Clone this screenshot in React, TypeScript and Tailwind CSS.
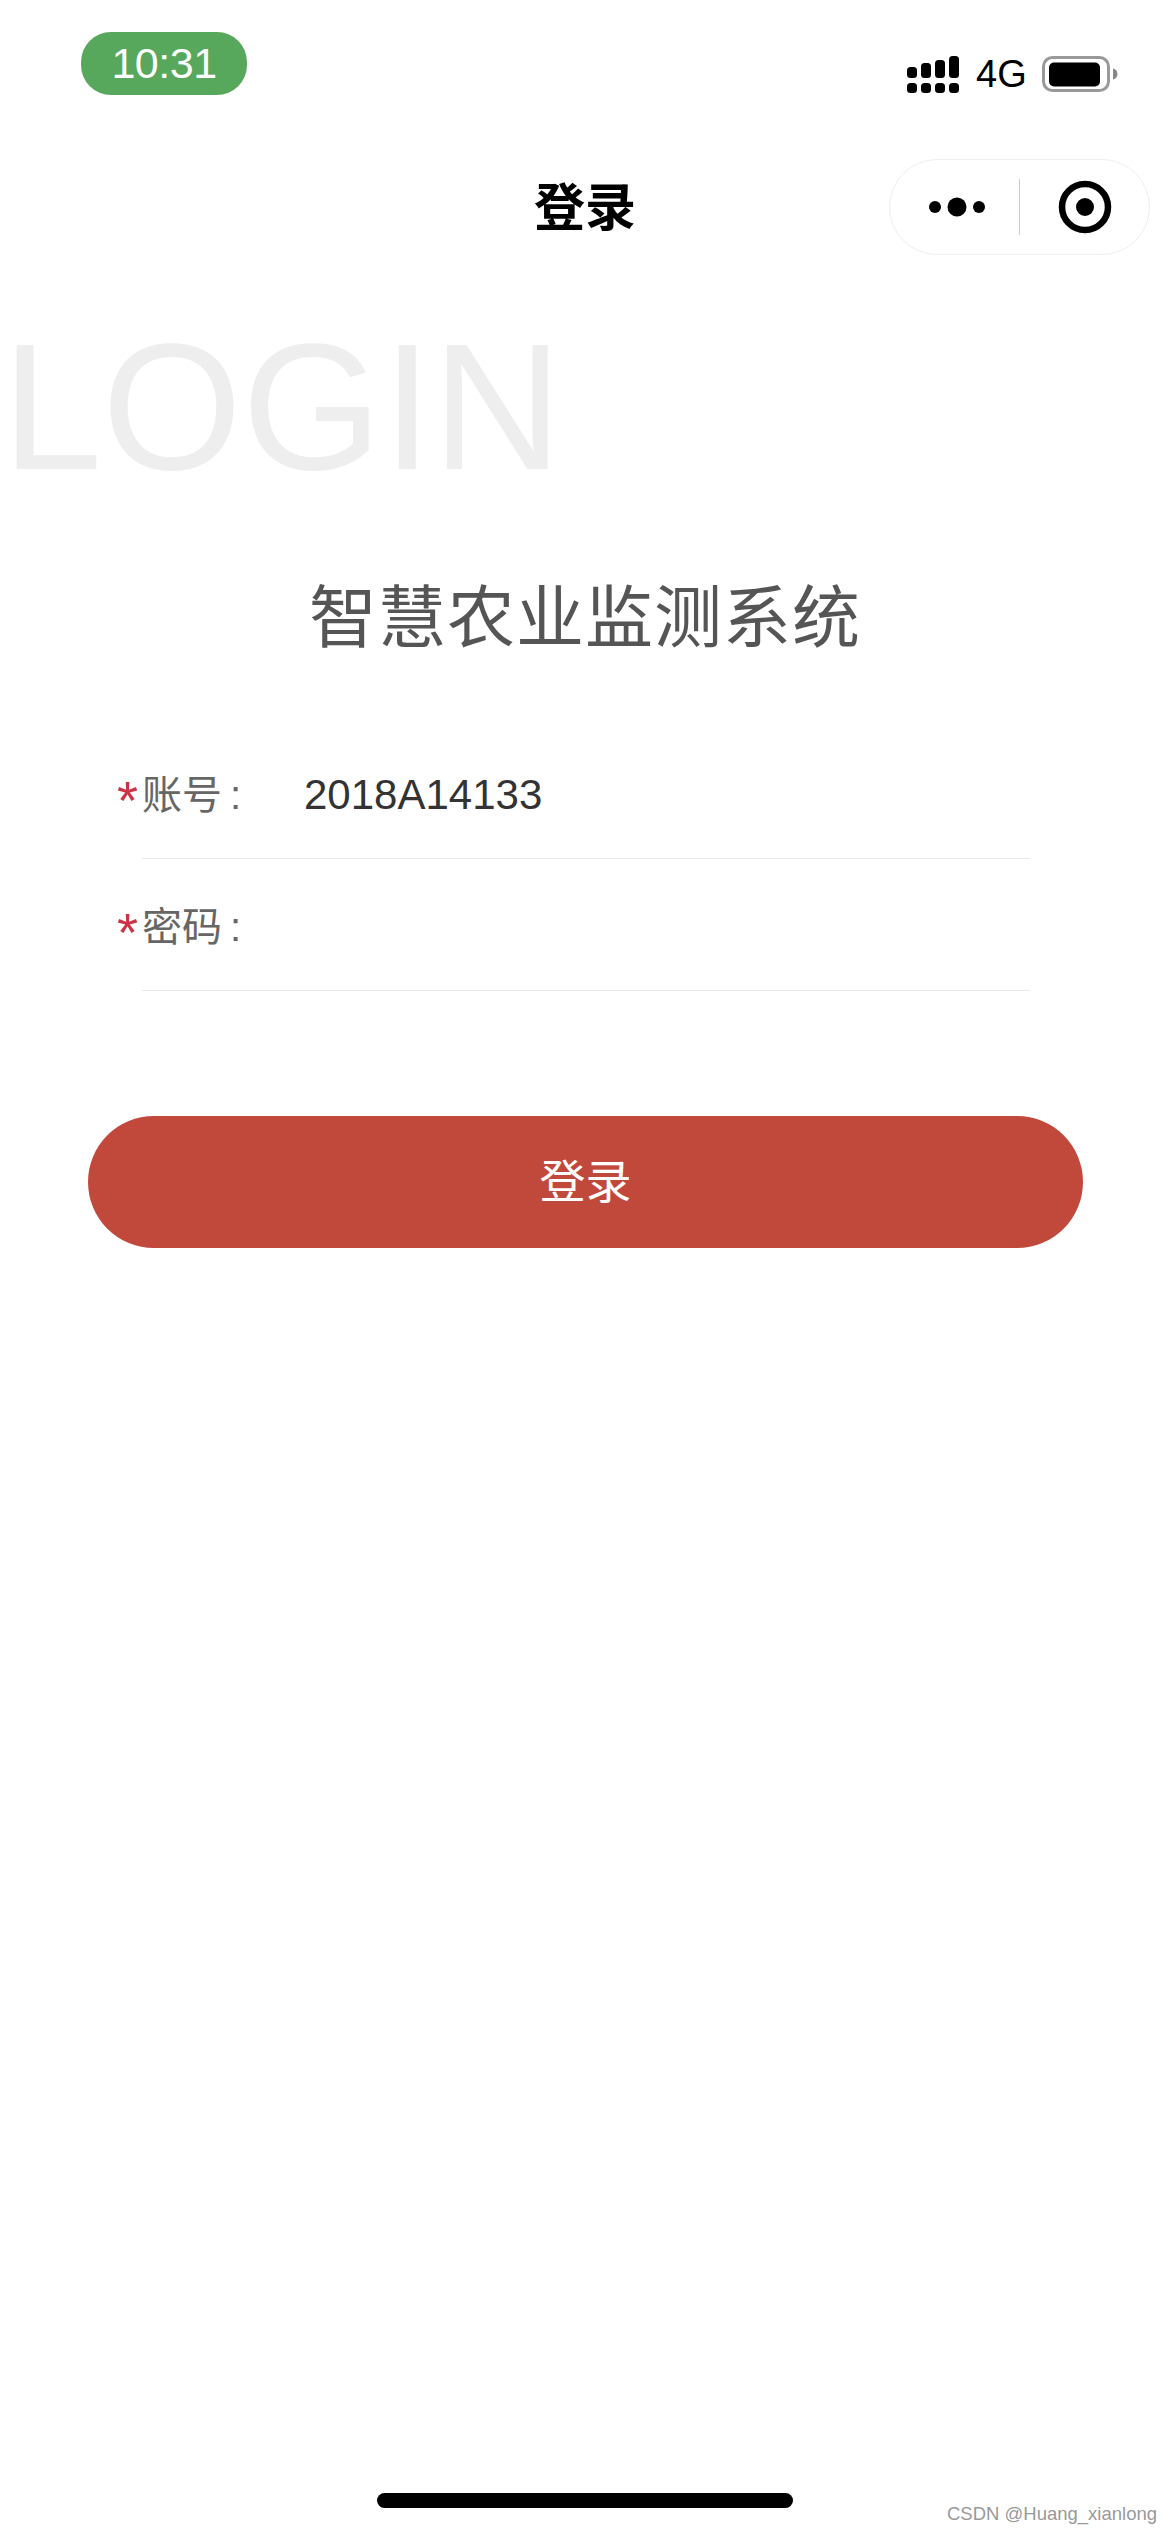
const sans = "font-['Liberation_Sans','Noto_Sans_CJK_SC',sans-serif]";

function Signal() {
  return (
    <svg width="52" height="38" viewBox="0 0 52 38" className="block">
      <rect x="0" y="11" width="10" height="11" rx="3.500" fill="#000" />
      <rect x="14" y="7" width="10" height="15" rx="3.500" fill="#000" />
      <rect x="28" y="4" width="10" height="18" rx="3.500" fill="#000" />
      <rect x="42" y="0" width="10" height="22" rx="3.500" fill="#000" />
      <rect x="0" y="27" width="10" height="10" rx="3.500" fill="#000" />
      <rect x="14" y="27" width="10" height="10" rx="3.500" fill="#000" />
      <rect x="28" y="27" width="10" height="10" rx="3.500" fill="#000" />
      <rect x="42" y="27" width="10" height="10" rx="3.500" fill="#000" />
    </svg>
  );
}

function Battery() {
  return (
    <svg width="76" height="36" viewBox="0 0 76 36" className="block">
      <rect x="1.5" y="1.5" width="65" height="33" rx="9" fill="none" stroke="#999" strokeWidth="3" />
      <rect x="7" y="6.5" width="51" height="24" rx="5" fill="#000" />
      <path d="M71 12.5c3 .5 4.5 3 4.5 5.500s-1.500 5-4.500 5.500z" fill="#888" />
    </svg>
  );
}

function Dots() {
  return (
    <svg width="62" height="22" viewBox="0 0 62 22" className="block">
      <circle cx="7" cy="11" r="6" fill="#000" />
      <circle cx="29" cy="11" r="9.500" fill="#000" />
      <circle cx="51" cy="11" r="6" fill="#000" />
    </svg>
  );
}

function Target() {
  return (
    <svg width="54" height="54" viewBox="0 0 54 54" className="block">
      <circle cx="27" cy="27" r="23" fill="none" stroke="#000" strokeWidth="6.500" />
      <circle cx="27" cy="27" r="9" fill="#000" />
    </svg>
  );
}

function Field({ label, value }: { label: string; value?: string }) {
  return (
    <div className="flex h-[132px] flex-col">
      <div className="flex h-[131px] items-center pt-[4px]">
        <span className="mt-[-12px] h-[32px] w-[25px] text-[54px] leading-[54px] text-[#cc3344]">*</span>
        <span className="flex w-[162px] items-center text-[40px] leading-none text-[#666]">
          {label}
          <span className="ml-[8px]">:</span>
        </span>
        {value ? <span className="text-[42px] leading-none text-[#333]">{value}</span> : null}
      </div>
      <div className="ml-[25px] h-[1px] w-[888px] bg-[#e8e8e8]" />
    </div>
  );
}

export default function App() {
  return (
    <div className={`relative flex h-[2532px] w-[1170px] flex-col overflow-hidden bg-white ${sans}`}>
      <div className="flex h-[96px] items-start justify-between pl-[81px] pr-[52px]">
        <div className="mt-[32px] flex h-[63px] w-[166px] items-center justify-center rounded-[30px] bg-[#57a85c] text-[43px] leading-none tracking-[-0.5px] text-white">
          10:31
        </div>
        <div className="mt-[56px] flex items-start">
          <Signal />
          <span className="ml-[17px] mt-[-1px] w-[51px] text-[38px] leading-[38px] text-black">4G</span>
          <span className="ml-[15px]">
            <Battery />
          </span>
        </div>
      </div>

      <div className="mt-[63px] flex h-[95px] items-center justify-between pl-[534px] pr-[20px]">
        <span className="mt-[4px] text-[51px] font-bold leading-none text-black">登录</span>
        <div className="flex h-[96px] w-[261px] items-center rounded-full border border-[#eeeeee] bg-white">
          <span className="ml-[38px]">
            <Dots />
          </span>
          <span className="ml-[29px] h-[56px] w-[1px] bg-[#cccccc]" />
          <span className="ml-[38px]">
            <Target />
          </span>
        </div>
      </div>

      <div className="mt-[68px] h-[170px] pl-[2px] text-[180px] font-normal leading-[170px] tracking-[0px] text-[#eeeeee]">
        LOGIN
      </div>

      <div className="mt-[86px] text-center text-[68px] leading-[80px] tracking-[1px] text-[#555555]">
        智慧农业监测系统
      </div>

      <div className="mt-[69px] flex flex-col pl-[117px]">
        <Field label="账号" value="2018A14133" />
        <Field label="密码" />
      </div>

      <button className="ml-[88px] mt-[125px] flex h-[132px] w-[995px] items-center justify-center rounded-[66px] bg-[#c1493b] text-[46px] leading-none text-white">
        登录
      </button>

      <div className="mx-auto mb-[24px] mt-auto h-[15px] w-[416px] rounded-full bg-black" />

      <div className="absolute bottom-[9px] right-[13px] text-[18.500px] leading-none text-[#999999]">
        CSDN @Huang_xianlong
      </div>
    </div>
  );
}
